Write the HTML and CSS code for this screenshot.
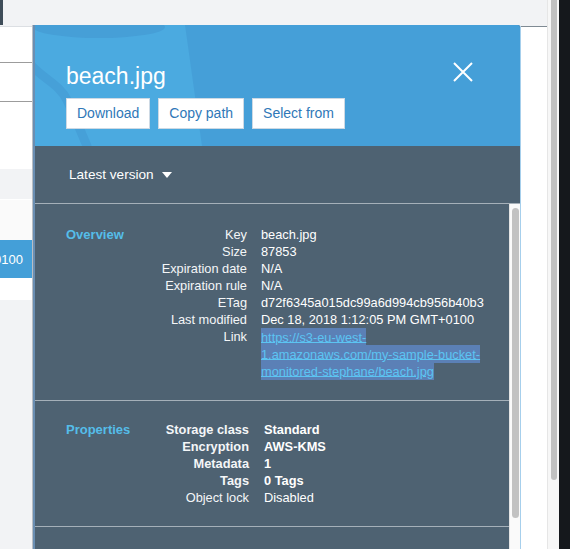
FILE: index.html
```html
<!DOCTYPE html>
<html lang="en">
<head>
<meta charset="utf-8">
<title>beach.jpg</title>
<link rel="stylesheet" href="styles.css">
</head>
<body>
<div class="screen">
  <div class="bg-left">
    <div class="topbar"><span class="dark-tab"></span></div>
    <div class="row row-a"></div>
    <div class="row row-b"></div>
    <div class="row row-c"></div>
    <div class="row row-gray"></div>
    <div class="row row-light"></div>
    <div class="row row-sel"><span>GMT+0100</span></div>
    <div class="row row-white"></div>
    <div class="row row-rest"></div>
  </div>

  <aside class="drawer">
    <header class="drawer-head">
      <svg class="bucket" width="485" height="121" viewBox="0 0 485 121" aria-hidden="true">
        <path d="M0 0 H150 L167 121 H0 Z" fill="#4baae0"/>
        <ellipse cx="64" cy="2" rx="66" ry="11" fill="#469fd7"/>
        <path d="M-4 40 C 10 55, 25 60, 32 75 C 40 92, 45 105, 52 121" fill="none" stroke="#46a0d8" stroke-width="9" stroke-linecap="round"/>
      </svg>
      <h1 class="title">beach.jpg</h1>
      <div class="actions">
        <button class="btn">Download</button>
        <button class="btn">Copy path</button>
        <button class="btn">Select from</button>
      </div>
      <button class="close" aria-label="Close">
        <svg width="20" height="20" viewBox="0 0 20 20"><path d="M1 1 L19 19 M19 1 L1 19" stroke="#fff" stroke-width="2" fill="none"/></svg>
      </button>
    </header>

    <div class="version-bar">
      <span>Latest version</span>
      <svg class="caret" width="10" height="6" viewBox="0 0 10 6"><path d="M0 0 H10 L5 6 Z" fill="#fff"/></svg>
    </div>

    <div class="drawer-body">
      <div class="content">
        <section class="section overview">
          <h2 class="sec-title">Overview</h2>
          <div class="label">Key</div><div class="value">beach.jpg</div>
          <div class="label">Size</div><div class="value">87853</div>
          <div class="label">Expiration date</div><div class="value">N/A</div>
          <div class="label">Expiration rule</div><div class="value">N/A</div>
          <div class="label">ETag</div><div class="value">d72f6345a015dc99a6d994cb956b40b3</div>
          <div class="label">Last modified</div><div class="value">Dec 18, 2018 1:12:05 PM GMT+0100</div>
          <div class="label">Link</div>
          <div class="value"><a class="link" href="#">https://s3-eu-west-<br>1.amazonaws.com/my-sample-bucket-<br>monitored-stephane/beach.jpg</a></div>
        </section>
        <section class="section properties">
          <h2 class="sec-title">Properties</h2>
          <div class="label strong">Storage class</div><div class="value strong">Standard</div>
          <div class="label strong">Encryption</div><div class="value strong">AWS-KMS</div>
          <div class="label strong">Metadata</div><div class="value strong">1</div>
          <div class="label strong">Tags</div><div class="value strong">0 Tags</div>
          <div class="label">Object lock</div><div class="value">Disabled</div>
        </section>
        <section class="section tail"></section>
      </div>
      <div class="vscroll"><div class="vthumb"></div></div>
    </div>
  </aside>

  <div class="bg-right"><div class="topbar dark-line"></div></div>
  <div class="page-scroll"><div class="page-thumb"></div></div>
  <div class="edge"></div>
</div>
</body>
</html>
```
FILE: styles.css
```css
* { box-sizing: border-box; }
html, body { margin: 0; padding: 0; }
body {
  font-family: "Liberation Sans", Arial, Helvetica, sans-serif;
  background: #f2f3f5;
  width: 570px;
  height: 549px;
  overflow: hidden;
}
.screen {
  display: flex;
  width: 570px;
  height: 549px;
}

/* page behind the drawer */
.bg-left {
  width: 33px;
  flex: none;
  display: flex;
  flex-direction: column;
  background: #fff;
}
.topbar {
  height: 27px;
  background: #f2f3f5;
  border-bottom: 1px solid #dcdfe3;
  flex: none;
}
.topbar.dark-line { border-bottom-color: #7f8a93; }
.dark-tab {
  display: block;
  width: 3px;
  height: 25px;
  background: #3f4d59;
}
.row { flex: none; background: #fff; }
.row-a { height: 36px; border-bottom: 1px solid #9c9c9c; }
.row-b { height: 39px; border-bottom: 1px solid #9c9c9c; }
.row-c { height: 67px; }
.row-gray { height: 30px; background: #f2f3f5; }
.row-light { height: 41px; background: #fafafa; border-top: 1px solid #fff; }
.row-sel {
  height: 38px;
  background: #449fd8;
  color: #fff;
  font-size: 13px;
  display: flex;
  align-items: center;
  justify-content: flex-end;
  padding-right: 10px;
  overflow: hidden;
  white-space: nowrap;
}
.row-white { height: 22px; }
.row-rest { flex: 1; background: #f2f3f5; }

.bg-right {
  width: 26px;
  flex: none;
  background: #fff;
}
.page-scroll {
  width: 12px;
  flex: none;
  background: #f7f7f7;
  border-left: 1px solid #e6e6e6;
  padding: 0 2px 0 3px;
}
.page-thumb {
  width: 6px;
  height: 480px;
  background: #c1c1c1;
  border-radius: 0 0 3px 3px;
}
.edge {
  width: 11px;
  flex: none;
  background: #15181c;
}

/* drawer */
.drawer {
  width: 488px;
  flex: none;
  margin-top: 25px;
  display: flex;
  flex-direction: column;
  background: #4e6272;
  border-left: 2px solid #6a8eb2;
  border-right: 1px solid #a6cfec;
  border-top-right-radius: 3px;
  box-shadow: -1px 0 0 #b9bec4;
  overflow: hidden;
  color: #fff;
}
.drawer-head {
  position: relative;
  height: 121px;
  flex: none;
  background: #459fd8;
  padding: 37px 31px 0 31px;
  overflow: hidden;
}
.bucket {
  position: absolute;
  left: 0;
  top: 0;
}
.title {
  position: relative;
  margin: 0;
  font-size: 23px;
  line-height: 28px;
  font-weight: normal;
  color: #fff;
}
.actions {
  position: relative;
  display: flex;
  gap: 8px;
  margin-top: 8px;
}
.btn {
  height: 31px;
  padding: 0 10px;
  background: #fff;
  border: 1px solid #cdd9e4;
  border-radius: 0;
  font-family: inherit;
  font-size: 14px;
  line-height: 29px;
  color: #2f78b8;
  cursor: pointer;
}
.close {
  position: absolute;
  top: 37px;
  right: 47px;
  width: 20px;
  height: 20px;
  padding: 0;
  border: 0;
  background: none;
  display: block;
}
.close svg { display: block; }

.version-bar {
  height: 58px;
  flex: none;
  display: flex;
  align-items: center;
  padding: 0 0 1px 34px;
  border-bottom: 1px solid #a5b0b9;
  font-size: 13.6px;
  color: #fff;
}
.caret { margin-left: 8px; margin-top: 1px; }

.drawer-body {
  flex: 1;
  display: flex;
  min-height: 0;
}
.content {
  flex: 1;
  display: flex;
  flex-direction: column;
}
.vscroll {
  width: 11px;
  flex: none;
  background: #fafafa;
  border-left: 1px solid #e4e4e4;
  padding: 4px 0 0 2px;
}
.vthumb {
  width: 7px;
  height: 310px;
  background: #c2c2c2;
  border-radius: 4px;
}

.section {
  display: grid;
  align-content: start;
  border-bottom: 1px solid #a5b0b9;
  font-size: 12.8px;
  line-height: 17px;
  flex: none;
}
.overview {
  grid-template-columns: 54px 113px 1fr;
  column-gap: 14px;
  padding: 22px 0 21px 31px;
}
.properties {
  grid-template-columns: 53px 115px 1fr;
  column-gap: 15px;
  padding: 20px 0 20px 31px;
}
.tail { flex: 1; border-bottom: 0; }
.sec-title {
  grid-column: 1;
  margin: 0;
  font-size: 13px;
  line-height: 17px;
  font-weight: bold;
  color: #55bde9;
  white-space: nowrap;
}
.label {
  grid-column: 2;
  text-align: right;
  color: #f4f6f8;
  white-space: nowrap;
}
.value {
  grid-column: 3;
  color: #fff;
  white-space: nowrap;
}
.strong { font-weight: bold; }
.link {
  color: #5cc4f2;
  text-decoration: underline;
  background: #5b80b6;
  padding: 1.5px 0;
  -webkit-box-decoration-break: clone;
  box-decoration-break: clone;
}
```
